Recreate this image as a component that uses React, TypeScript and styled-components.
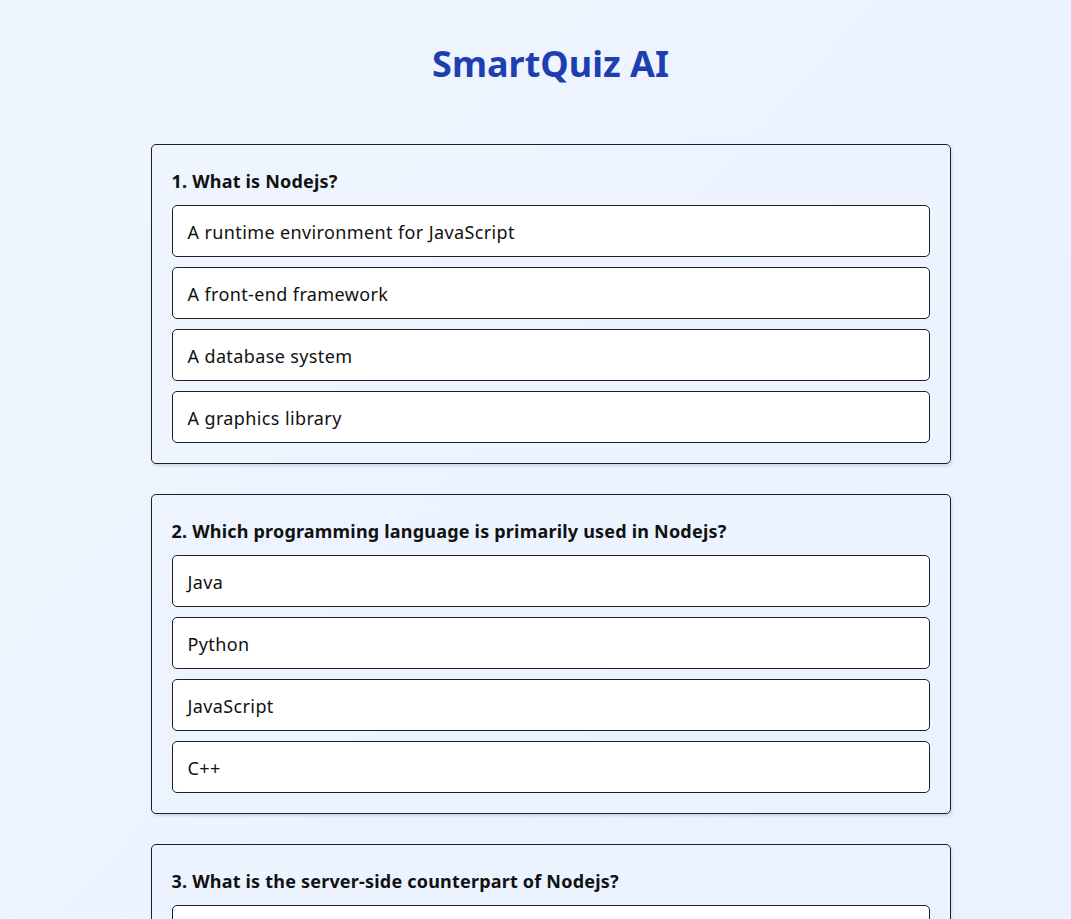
import React from 'react'
import styled, { createGlobalStyle } from 'styled-components'

const GlobalStyle = createGlobalStyle`
  * {
    box-sizing: border-box;
  }

  body {
    margin: 0;
    font-family: "Noto Sans", "Open Sans", sans-serif;
    color: #111;
    background: #ecf3ff;
  }
`

type Question = {
  question: string
  options: string[]
}

const questions: Question[] = [
  {
    question: 'What is Nodejs?',
    options: [
      'A runtime environment for JavaScript',
      'A front-end framework',
      'A database system',
      'A graphics library',
    ],
  },
  {
    question: 'Which programming language is primarily used in Nodejs?',
    options: ['Java', 'Python', 'JavaScript', 'C++'],
  },
  {
    question: 'What is the server-side counterpart of Nodejs?',
    options: ['Express.js', 'React', 'Angular', 'Vue.js'],
  },
]

export default function App() {
  const [answers, setAnswers] = React.useState<Record<number, number>>({})

  return (
    <Wrapper>
      <GlobalStyle />
      <Title>SmartQuiz AI</Title>
      <QuizList>
        {questions.map((q, qi) => (
          <QuestionCard key={qi}>
            <QuestionText>
              {qi + 1}. {q.question}
            </QuestionText>
            <OptionList>
              {q.options.map((opt, oi) => (
                <OptionButton
                  key={oi}
                  $selected={answers[qi] === oi}
                  onClick={() => setAnswers({ ...answers, [qi]: oi })}
                >
                  {opt}
                </OptionButton>
              ))}
            </OptionList>
          </QuestionCard>
        ))}
      </QuizList>
    </Wrapper>
  )
}

const Wrapper = styled.div`
  min-height: 100vh;
  padding: 40px 0 40px 30px;
  background: linear-gradient(to bottom right, #eff6ff, #e9f1ff);
`

const Title = styled.h1`
  margin: 0 0 56px;
  text-align: center;
  font-size: 36px;
  line-height: 48px;
  font-weight: 700;
  color: #1e3fb0;
`

const QuizList = styled.div`
  width: 800px;
  margin: 0 auto;
  display: flex;
  flex-direction: column;
  gap: 30px;
`

const QuestionCard = styled.div`
  border: 1px solid #1f1f1f;
  border-radius: 5px;
  padding: 22px 20px 20px;
  box-shadow: 1px 2px 3px rgba(0, 0, 0, 0.12);
`

const QuestionText = styled.h2`
  margin: 0 0 10px;
  font-size: 18px;
  line-height: 28px;
  font-weight: 700;
  letter-spacing: 0.2px;
`

const OptionList = styled.div`
  display: flex;
  flex-direction: column;
  gap: 10px;
`

const OptionButton = styled.button<{ $selected: boolean }>`
  display: block;
  width: 100%;
  text-align: left;
  font-family: inherit;
  font-size: 18px;
  line-height: 26px;
  letter-spacing: 0.38px;
  color: #111;
  padding: 13px 15px 11px;
  border: 1px solid #1f1f1f;
  border-radius: 5px;
  background: ${(p) => (p.$selected ? '#dbeafe' : '#fff')};
  cursor: pointer;
`
